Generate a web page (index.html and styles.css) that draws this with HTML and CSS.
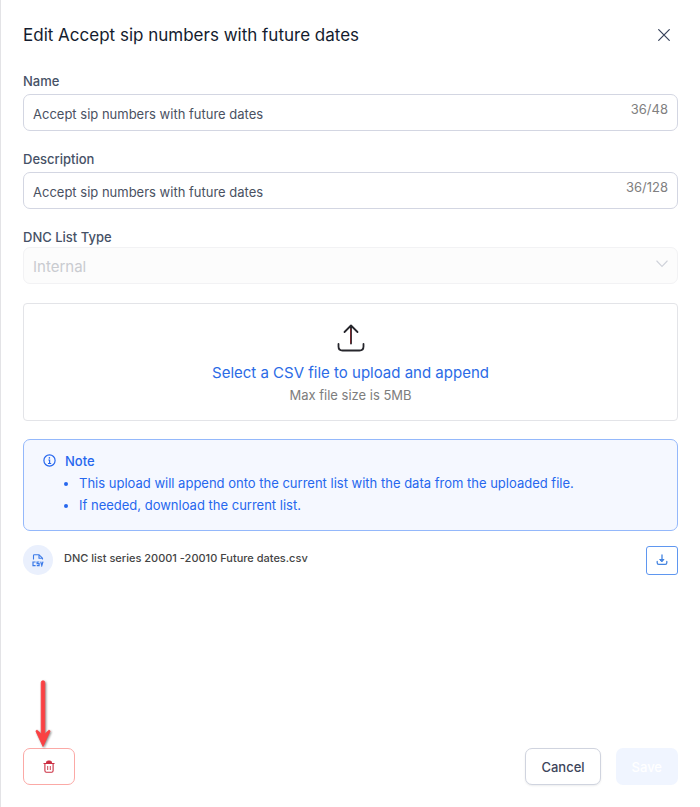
FILE: index.html
```html
<!DOCTYPE html>
<html lang="en">
<head>
<meta charset="utf-8">
<meta name="viewport" content="width=device-width, initial-scale=1">
<title>Edit DNC list</title>
<link rel="stylesheet" href="styles.css">
</head>
<body>
<main class="panel">
  <header class="panel-header">
    <h1 class="panel-title">Edit Accept sip numbers with future dates</h1>
    <button class="close" type="button" aria-label="Close">
      <svg width="12" height="12" viewBox="0 0 12 12" fill="none" stroke="currentColor" stroke-width="1.2" stroke-linecap="round"><path d="M.7.7l10.6 10.6M11.3.7L.7 11.3"/></svg>
    </button>
  </header>

  <form class="form">
    <div class="field">
      <label class="label" for="name">Name</label>
      <div class="control">
        <input class="input" id="name" type="text" maxlength="48" value="Accept sip numbers with future dates">
        <span class="counter">36/48</span>
      </div>
    </div>
    <div class="field">
      <label class="label" for="description">Description</label>
      <div class="control">
        <input class="input" id="description" type="text" maxlength="128" value="Accept sip numbers with future dates">
        <span class="counter">36/128</span>
      </div>
    </div>
    <div class="field field-tight">
      <label class="label" for="type">DNC List Type</label>
      <div class="control control-disabled">
        <select class="select" id="type" disabled><option>Internal</option></select>
        <svg class="chevron" width="12" height="8" viewBox="0 0 12 8" fill="none" stroke="currentColor" stroke-width="1.1" stroke-linecap="round"><path d="M.8 1L6 6.4 11.2 1"/></svg>
      </div>
    </div>

    <label class="upload" for="file">
      <svg width="28" height="28" viewBox="0 0 28 28" fill="none" stroke="#26262c" stroke-width="1.8" stroke-linecap="round" stroke-linejoin="round"><path d="M14 19.500V2M7.500 8L14 1.500 20.500 8M1.500 20v2.500q0 4 4 4h17q4 0 4-4V20"/><path d="M13.600 19V5" stroke="#7c2429" stroke-width="1"/></svg>
      <span class="upload-title">Select a CSV file to upload and append</span>
      <span class="upload-hint">Max file size is 5MB</span>
      <input class="upload-input" id="file" type="file" accept=".csv">
    </label>

    <section class="note">
      <svg class="note-icon" width="13" height="13" viewBox="0 0 13 13" fill="none" stroke="currentColor" stroke-width="1.2"><circle cx="6.500" cy="6.500" r="5.600"/><path d="M5.300 6h1.300v3.500M5 9.500h3.200"/><circle cx="6.400" cy="3.900" r=".8" fill="currentColor" stroke="none"/></svg>
      <div>
        <h2 class="note-title">Note</h2>
        <ul class="note-list">
          <li>This upload will append onto the current list with the data from the uploaded file.</li>
          <li>If needed, download the current list.</li>
        </ul>
      </div>
    </section>

    <div class="file-row">
      <span class="file-badge">
        <svg width="12" height="13" viewBox="0 0 12 13" fill="none" stroke="currentColor" stroke-width="1.1"><path d="M1.500 5.500v-4q0-.8.800-.8H7l3.500 3.500v1.300M7 .8v3.400h3.500"/><path d="M3.600 8H1v3.600h2.600M7.300 8H5.100v1.700h2v1.900H4.800M8.700 7.600l1.100 4 1.200-4" stroke-width="1.200"/></svg>
      </span>
      <span class="file-name">DNC list series 20001 -20010 Future dates.csv</span>
      <button class="download" type="button" aria-label="Download">
        <svg width="12" height="12" viewBox="0 0 12 12" fill="none" stroke="currentColor" stroke-width="1.300" stroke-linecap="round" stroke-linejoin="round"><path d="M6 1v6M1.200 7.500v1.200q0 1.600 1.600 1.600h6.400q1.600 0 1.600-1.600V7.500"/><path d="M4 5.500h4L6 7.600z" fill="currentColor" stroke-width="1"/></svg>
      </button>
    </div>

    <footer class="footer">
      <div class="delete-wrap">
        <svg class="arrow" width="24" height="76" viewBox="0 0 24 76" aria-hidden="true"><path d="M10.200 5.500q0-1.800 1.800-1.800t1.800 1.800V57l3.700-3.600q1.600-.6 1.500 1L12 69.500 5 54.400q-.1-1.600 1.500-1l3.700 3.600z" fill="#fa4143" stroke="#fa4143" stroke-width=".8" stroke-linejoin="round"/></svg>
        <button class="button button-delete" type="button" aria-label="Delete">
          <svg width="12" height="14" viewBox="0 0 12 14" fill="none" stroke="currentColor" stroke-width="1.100"><path d="M.5 3.500h11M1.900 3.500v7.300q0 1.500 1.500 1.500h5.200q1.500 0 1.500-1.500V3.500"/><path d="M3.500 3q0-2 1.500-2h2q1.500 0 1.500 2z" fill="currentColor"/><path d="M4.700 6v4M7.300 6v4" stroke-width=".9"/></svg>
        </button>
      </div>
      <div class="actions">
        <button class="button button-cancel" type="button">Cancel</button>
        <button class="button button-save" type="submit" disabled>Save</button>
      </div>
    </footer>
  </form>
</main>
</body>
</html>
```
FILE: styles.css
```css
* {
  box-sizing: border-box;
}

body {
  margin: 0;
  background: #fff;
  font-family: Inter, "Liberation Sans", sans-serif;
  font-size: 13px;
  line-height: 20px;
  color: #3f485a;
}

button,
input,
select {
  font: inherit;
}

svg {
  display: block;
}

.panel {
  display: flex;
  flex-direction: column;
  min-height: 100vh;
  padding: 23px 22px 22px;
  border-left: 1px solid #e3e3e6;
}

.panel-header {
  display: flex;
  align-items: center;
  justify-content: space-between;
  margin-bottom: 24px;
}

.panel-title {
  margin: 0;
  font-size: 17px;
  line-height: 24px;
  font-weight: 400;
  color: #141c2e;
}

.close {
  padding: 6px 8px;
  border: 0;
  background: none;
  color: #36415a;
}

.form {
  display: flex;
  flex: 1;
  flex-direction: column;
}

.field {
  display: flex;
  flex-direction: column;
  gap: 3px;
  margin-bottom: 18px;
}

.field-tight {
  gap: 0;
  margin-bottom: 19px;
}

.label {
  font-weight: 500;
  color: #465166;
}

.control {
  display: flex;
  height: 37px;
  border: 1px solid #d3d6e2;
  border-radius: 7px;
  padding: 0 9px;
}

.input {
  flex: 1;
  min-width: 0;
  padding: 2px 0 0;
  border: 0;
  outline: 0;
  background: none;
  color: #4a5162;
}

.counter {
  padding-top: 4px;
  color: #808080;
}

.control-disabled {
  border-color: #f2f2f4;
  background: #fcfcfc;
}

.select {
  flex: 1;
  padding: 2px 0 0;
  border: 0;
  background: none;
  appearance: none;
  font-size: 15px;
  color: #c9cbd0;
  opacity: 1;
}

.chevron {
  margin-top: 12px;
  color: #cfd2da;
}

.upload {
  position: relative;
  display: flex;
  flex-direction: column;
  align-items: center;
  padding: 20px 10px 15px;
  border: 1px solid #e3e4e8;
  border-radius: 4px;
}

.upload-title {
  margin-top: 9px;
  font-size: 15px;
  line-height: 24px;
  color: #2b6be6;
}

.upload-hint {
  color: #7d7d7d;
}

.upload-input {
  position: absolute;
  width: 1px;
  height: 1px;
  opacity: 0;
}

.note {
  display: flex;
  gap: 9px;
  margin-top: 18px;
  padding: 10px 19px 14px;
  border: 1px solid #94b8fb;
  border-radius: 7px;
  background: #f5f8ff;
  color: #2667ee;
}

.note-icon {
  margin-top: 4px;
}

.note-title {
  margin: 0;
  font-size: 13px;
  line-height: 22px;
  font-weight: 500;
}

.note-list {
  margin: 0;
  padding-left: 14px;
  line-height: 22px;
}

.file-row {
  display: flex;
  align-items: center;
  margin-top: 14px;
}

.file-badge {
  display: grid;
  place-items: center;
  width: 30px;
  height: 30px;
  border-radius: 50%;
  background: #eaf0fd;
  color: #3b7ae8;
}

.file-name {
  flex: 1;
  margin-left: 11px;
  padding-bottom: 4px;
  font-size: 11px;
  font-weight: 500;
  color: #444;
}

.download {
  display: grid;
  place-items: center;
  width: 32px;
  height: 29px;
  padding: 0;
  border: 1px solid #5f97f0;
  border-radius: 3px;
  background: #fff;
  color: #4484e0;
}

.footer {
  display: flex;
  align-items: flex-end;
  justify-content: space-between;
  margin-top: auto;
}

.delete-wrap {
  position: relative;
}

.arrow {
  position: absolute;
  bottom: 100%;
  left: 8px;
  margin-bottom: -5px;
  filter: drop-shadow(1px 1px 1px rgba(0, 0, 0, 0.45));
  pointer-events: none;
}

.actions {
  display: flex;
  gap: 15px;
}

.button {
  display: flex;
  align-items: center;
  justify-content: center;
  height: 37px;
  padding: 0 15px;
  border: 1px solid transparent;
  border-radius: 7px;
  background: #fff;
  font-weight: 500;
}

.button-delete {
  padding: 0 19px;
  border-color: #fba9a6;
  color: #cb2f42;
}

.button-cancel {
  border-color: #d0d4df;
  box-shadow: 0 1px 2px rgba(16, 24, 40, 0.08);
  color: #3c455a;
}

.button-save {
  background: #f0f5ff;
  color: #fff;
}
```
